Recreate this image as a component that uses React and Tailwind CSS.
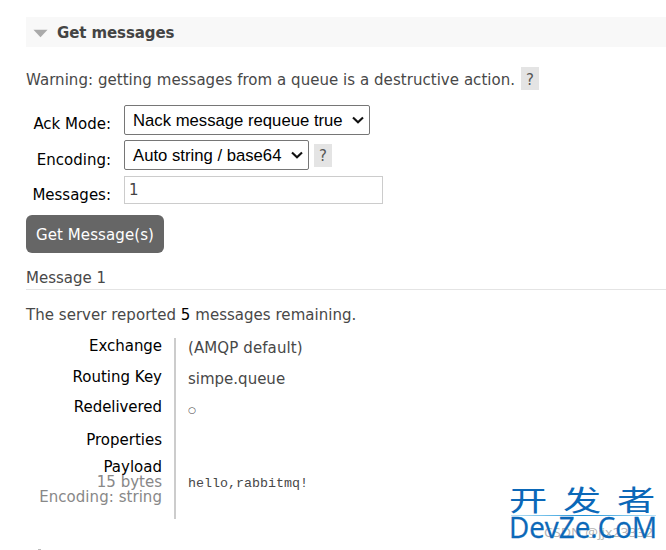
import React from 'react'

function Chevron() {
    return (
        <svg width="12" height="8" viewBox="0 0 12 8" fill="none" className="shrink-0">
            <path d="M1 1.5 L6 6.3 L11 1.5" stroke="#111" strokeWidth="2.1" />
        </svg>
    )
}

function Help() {
    return (
        <span className="flex h-[23px] w-[18px] shrink-0 items-center justify-center bg-[#e4e4e4] pt-[2px] text-[15px] text-[#555]">
            ?
        </span>
    )
}

function Select({ className, children }) {
    return (
        <button
            type="button"
            className={`flex h-[30px] items-center justify-between rounded-[2px] border border-[#767676] bg-white pl-[8px] pr-[5px] font-['Liberation_Sans',Arial,sans-serif] text-[16.7px] text-black ${className}`}
        >
            <span className="pt-px">{children}</span>
            <Chevron />
        </button>
    )
}

function Logo() {
    return (
        <div className="absolute left-[505px] top-[480px] h-[70px] w-[161px]">
            <svg width="161" height="70" viewBox="0 0 161 70">
                <defs>
                    <linearGradient id="rule" x1="0" x2="1">
                        <stop offset="0" stopColor="#1c9fe0" stopOpacity="0.3" />
                        <stop offset="0.5" stopColor="#1c8fd6" />
                        <stop offset="1" stopColor="#1c9fe0" stopOpacity="0.3" />
                    </linearGradient>
                </defs>
                <text x="39" y="57" fontSize="13" fill="#b4b4b4" textLength="109" lengthAdjust="spacingAndGlyphs" fontFamily="'Open Sans', sans-serif">CSDN @jjx23332</text>
                <g fill="#0b68b8" fontFamily="'Noto Sans CJK SC', sans-serif" fontSize="29">
                    <text transform="translate(4 31) scale(1.32 1)">开</text>
                    <text transform="translate(58 31) scale(1.32 1)">发</text>
                    <text transform="translate(112 31) scale(1.32 1)">者</text>
                </g>
                <rect x="6" y="35" width="145" height="1" fill="url(#rule)" />
                <text x="4" y="58" fontSize="29" fill="#0b68b8" stroke="#0b68b8" strokeWidth="0.3" textLength="148" lengthAdjust="spacingAndGlyphs" fontFamily="'Open Sans', sans-serif">DevZe.CoM</text>
            </svg>
        </div>
    )
}

function App() {
    return (
        <div className="relative h-[550px] w-[666px] overflow-hidden whitespace-nowrap bg-white pl-[26px] pt-[17px] font-['DejaVu_Sans',Verdana,sans-serif] text-[15px] leading-[20px] text-[#484848]">
            <h2 className="flex h-[30px] items-center bg-[#f8f8f8] pl-[7px] font-bold text-[#444]">
                <svg width="15" height="9" viewBox="0 0 16 9" className="mr-[9px] mt-[2px]">
                    <path d="M0.5 0.5 H15.5 L8 8.5 Z" fill="#aaa" />
                </svg>
                <span className="pt-[2px] tracking-[-0.1px]">Get messages</span>
            </h2>

            <p className="mt-[20px] flex h-[23px] items-center">
                <span className="w-[495px] pt-[2px] tracking-[0.045px]">Warning: getting messages from a queue is a destructive action.</span>
                <Help />
            </p>

            {/* Request form */}
            <div className="mt-[15px] flex">
                <div className="flex w-[85px] flex-col items-end pt-[9px] text-black">
                    <span className="h-[36px]">Ack Mode:</span>
                    <span className="h-[35px]">Encoding:</span>
                    <span>Messages:</span>
                </div>
                <div className="ml-[13px] flex flex-col">
                    <Select className="w-[246px]">Nack message requeue true</Select>
                    <div className="mt-[5px] flex items-center gap-[5px]">
                        <Select className="w-[185px]">Auto string / base64</Select>
                        <Help />
                    </div>
                    <input
                        defaultValue="1"
                        className="mt-[6px] h-[28px] w-[259px] border border-[#ccc] pl-[4px] text-[15px] text-[#444] outline-none"
                    />
                </div>
            </div>
            <button type="button" className="mt-[10px] block h-[38px] w-[138px] rounded-[6px] bg-[#666] pt-[2px] tracking-[0.1px] text-white">
                Get Message(s)
            </button>

            <h3 className="mt-[15px] h-[22px] border-b border-[#e4e4e4]">Message 1</h3>
            <p className="mt-[15px] tracking-[0.03px]">
                The server reported <span className="text-black">5</span> messages remaining.
            </p>

            {/* Message details */}
            <div className="mt-[13px] flex h-[181px]">
                <div className="flex w-[150px] flex-col items-end border-r-2 border-[#ccc] pr-[12px] text-black">
                    <span className="-mt-[2px] h-[31px] tracking-[-0.05px]">Exchange</span>
                    <span className="h-[30px]">Routing Key</span>
                    <span className="h-[33px] tracking-[-0.05px]">Redelivered</span>
                    <span className="h-[30px]">Properties</span>
                    <div className="flex flex-col items-end leading-[15px] text-[#888]">
                        <span className="text-black">Payload</span>
                        <span>15 bytes</span>
                        <span className="tracking-[0.05px]">Encoding: string</span>
                    </div>
                </div>
                <div className="flex flex-col pl-[12px]">
                    <span className="h-[31px] tracking-[0.1px]">(AMQP default)</span>
                    <span className="h-[31px]">simpe.queue</span>
                    <span className="h-[74px] text-[9px]">○</span>
                    <span className="font-['Liberation_Mono',monospace] text-[13.33px]">hello,rabbitmq!</span>
                </div>
            </div>
            <div className="ml-[12px] mt-[30px] h-[2px] w-[3px] bg-[#bbb]" />
            <Logo />
        </div>
    )
}

export default App
